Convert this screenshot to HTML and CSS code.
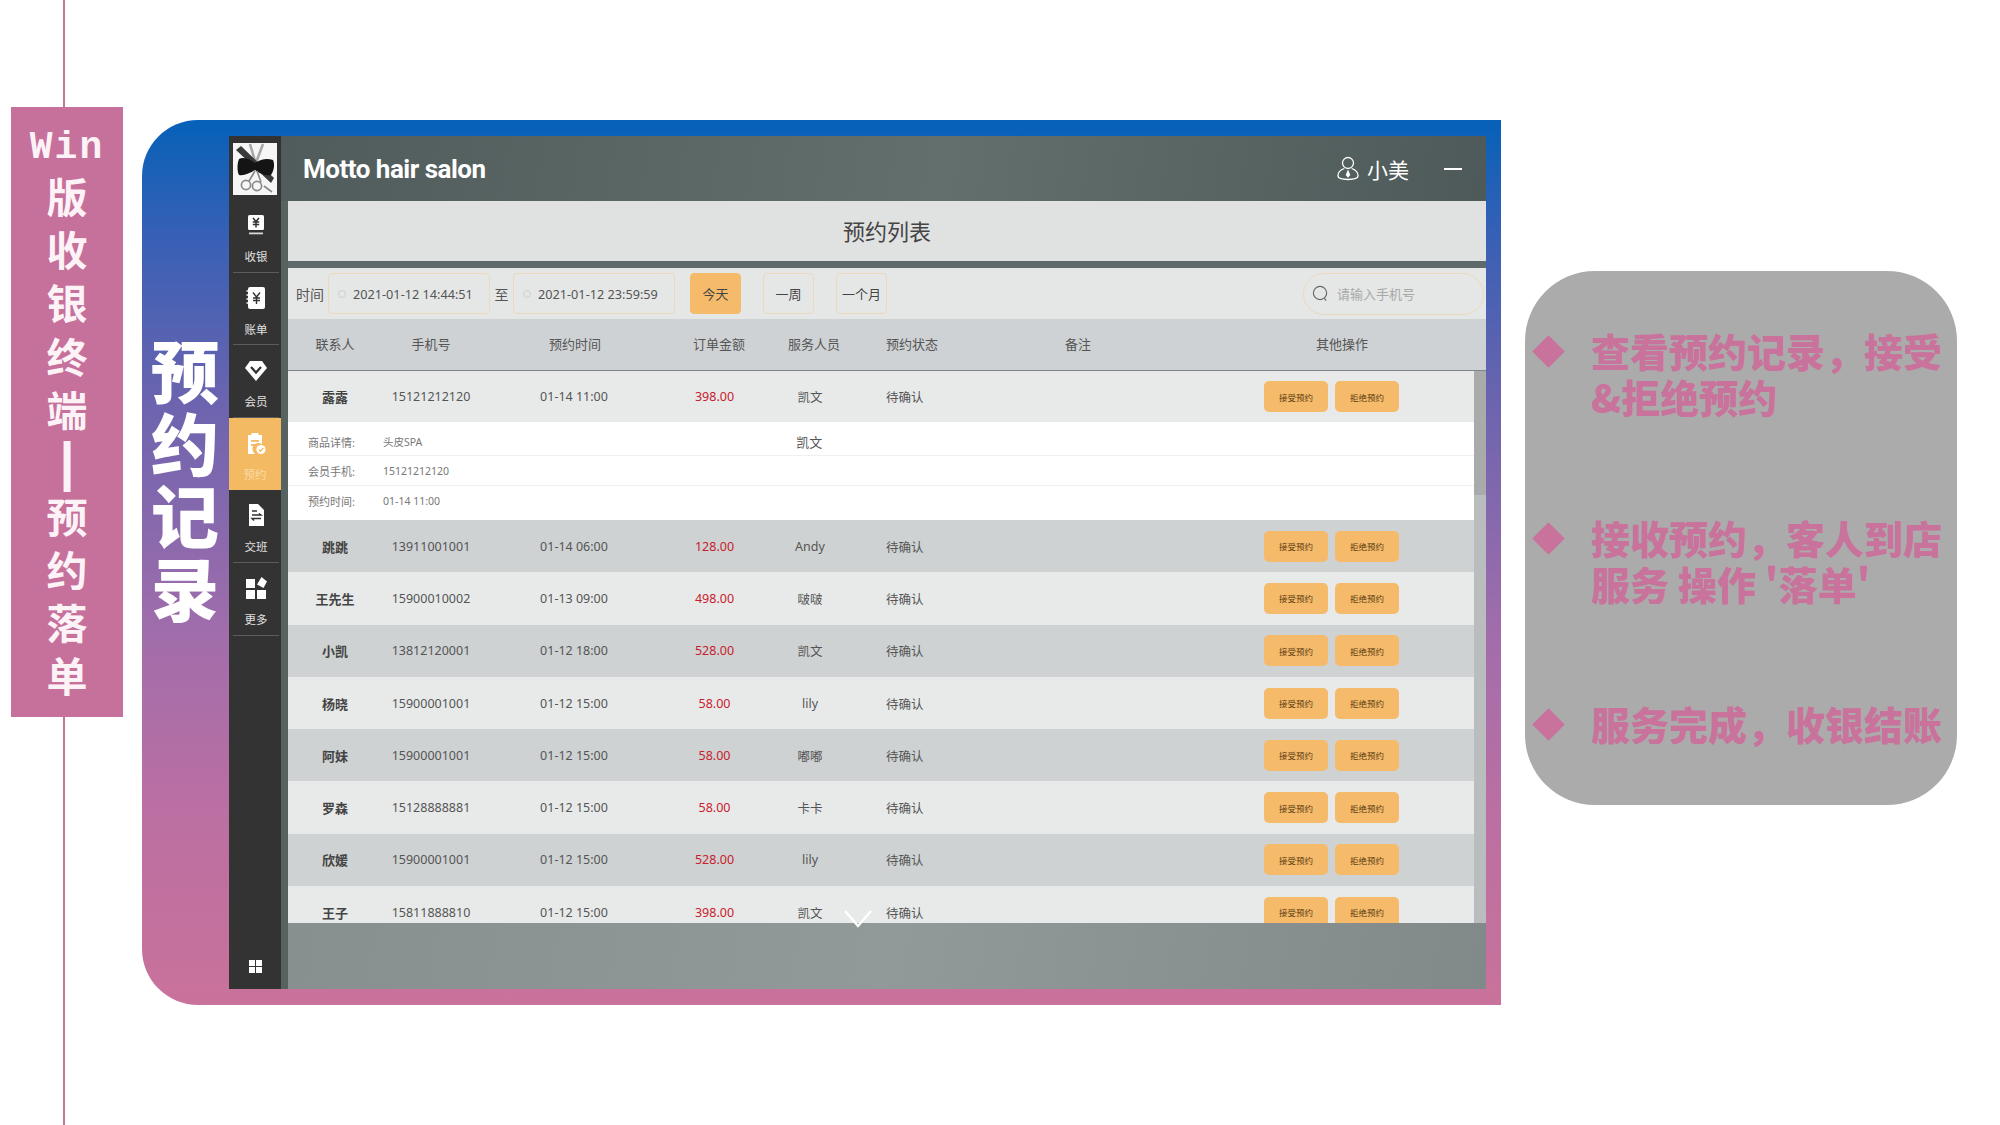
FILE: index.html
```html
<!doctype html>
<html lang="zh-CN">
    <head>
        <meta name="viewport" content="width=device-width, initial-scale=1">
        <title>Win版收银终端 预约落单</title>
        <link rel="stylesheet" href="styles.css">
    </head>
    <body>
        <div class="slide">
            <div class="rail">
                <div class="rail-line rail-top"></div>
                <div class="banner">
                    <div class="banner-latin">Win</div>
                    <div>版</div><div>收</div><div>银</div><div>终</div><div>端</div>
                    <div class="banner-bar">|</div>
                    <div>预</div><div>约</div><div>落</div><div>单</div>
                </div>
                <div class="rail-line rail-bottom"></div>
            </div>

            <div class="stage">
                <div class="stage-title">
                    <div>预</div><div>约</div><div>记</div><div>录</div>
                </div>
                <div class="app">
                    <div class="side">
                        <div class="logo">
                            <svg viewBox="0 0 44 52" width="44" height="52">
                                <path d="M17 1 L24 25 M30 1 L21 25" stroke="#a8a8a8" stroke-width="2.6" fill="none"/>
                                <path d="M3 7 L8 3 L41 35 L38 40 Z" fill="#3a3a3a"/>
                                <path d="M22 20 C16 15 9 14 6 16 C4 21 4 28 6 32 C11 33 17 30 22 27 C27 31 33 33 38 32 C41 28 42 21 40 17 C34 15 28 16 22 20 Z" fill="#141414"/>
                                <circle cx="13" cy="42" r="4.6" fill="none" stroke="#8a8a8a" stroke-width="1.7"/>
                                <circle cx="24" cy="43" r="4.6" fill="none" stroke="#8a8a8a" stroke-width="1.7"/>
                                <path d="M16 38 L22 28 M28 39 L24 28 M31 43 L39 49" stroke="#8a8a8a" stroke-width="1.7" fill="none"/>
                            </svg>
                        </div>
                        <div class="side-item">
                            <svg class="side-icon" viewBox="0 0 24 24" width="24" height="24">
                                <rect x="4" y="2" width="16" height="15" rx="1.5" fill="#fff"/>
                                <path d="M9 5 L12 8.5 L15 5 M8.8 9 H15.2 M8.8 11.5 H15.2 M12 8.5 V14.5" stroke="#333" stroke-width="1.5" fill="none"/>
                                <rect x="5" y="19.5" width="14" height="1.8" fill="#d8d8d8"/>
                            </svg>
                            <span>收银</span>
                        </div>
                        <div class="side-item">
                            <svg class="side-icon" viewBox="0 0 24 24" width="24" height="24">
                                <rect x="4" y="1" width="17" height="22" rx="2" fill="#fff"/>
                                <path d="M2.5 5 H6 M2.5 9 H6 M2.5 13 H6 M2.5 17 H6" stroke="#fff" stroke-width="1.4"/>
                                <path d="M9 6.5 L12.5 11 L16 6.5 M9 12 H16 M9 14.5 H16 M12.5 11 V18" stroke="#333" stroke-width="1.4" fill="none"/>
                            </svg>
                            <span>账单</span>
                        </div>
                        <div class="side-item">
                            <svg class="side-icon" viewBox="0 0 24 24" width="24" height="24">
                                <path d="M6 3 H18 L23 10 L12 23 L1 10 Z" fill="#fff"/>
                                <path d="M7 9 L12 14.5 L17 9" stroke="#333" stroke-width="2.2" fill="none"/>
                            </svg>
                            <span>会员</span>
                        </div>
                        <div class="side-item side-item-active">
                            <svg class="side-icon" viewBox="0 0 24 24" width="24" height="24">
                                <path d="M5 4 H8.5 V2 H15.5 V4 H19 V13 A6 6 0 0 0 12 23 H5 Z" fill="#fff"/>
                                <rect x="8" y="9" width="8" height="1.8" fill="#f4b963"/>
                                <rect x="8" y="13" width="4" height="1.8" fill="#f4b963"/>
                                <circle cx="18" cy="18.5" r="4.6" fill="#fff"/>
                                <path d="M15.8 18.5 L17.5 20.2 L20.3 17" stroke="#f4b963" stroke-width="1.3" fill="none"/>
                            </svg>
                            <span>预约</span>
                        </div>
                        <div class="side-item">
                            <svg class="side-icon" viewBox="0 0 24 24" width="24" height="24">
                                <path d="M5 1 H14 L20 7 V23 H5 Z" fill="#fff"/>
                                <path d="M8 8 H13 M8 12 H17 L15 10.5 M17 15.5 H8 L10 17.5" stroke="#333" stroke-width="1.4" fill="none"/>
                            </svg>
                            <span>交班</span>
                        </div>
                        <div class="side-item">
                            <svg class="side-icon" viewBox="0 0 24 24" width="24" height="24">
                                <rect x="2" y="3" width="9" height="9" fill="#fff"/>
                                <rect x="2" y="14" width="9" height="9" fill="#fff"/>
                                <rect x="13" y="14" width="9" height="9" fill="#fff"/>
                                <path d="M17.5 1 L23 5.5 L19.5 12 L13 8.5 Z" fill="#fff"/>
                            </svg>
                            <span>更多</span>
                        </div>
                        <div class="side-spacer"></div>
                        <div class="side-grid">
                            <i></i><i></i><i></i><i></i>
                        </div>
                    </div>

                    <div class="main">
                        <div class="topbar">
                            <div class="brand">Motto hair salon</div>
                            <div class="user">
                                <svg viewBox="0 0 24 28" width="22" height="27">
                                    <circle cx="12" cy="8" r="6" fill="none" stroke="#fff" stroke-width="1.4"/>
                                    <path d="M8 14 C2 16 1 20 1 22 C1 25 4 26 12 26 C20 26 23 25 23 22 C23 20 22 16 16 14" fill="none" stroke="#fff" stroke-width="1.4"/>
                                    <path d="M12 15 L14.5 21 L12 24 L9.5 21 Z" fill="#fff"/>
                                </svg>
                                <span>小美</span>
                            </div>
                            <div class="minimize"></div>
                        </div>
                        <div class="pagehead">预约列表</div>
                        <div class="filters">
                            <span class="filter-label">时间</span>
                            <div class="date-box"><i class="clock"></i>2021-01-12 14:44:51</div>
                            <span class="filter-to">至</span>
                            <div class="date-box"><i class="clock"></i>2021-01-12 23:59:59</div>
                            <button type="button" class="range range-on">今天</button>
                            <button type="button" class="range">一周</button>
                            <button type="button" class="range">一个月</button>
                            <div class="search">
                                <svg viewBox="0 0 18 18" width="17" height="17">
                                    <circle cx="8.5" cy="8.5" r="7" fill="none" stroke="#666" stroke-width="1.2"/>
                                    <path d="M13 14 L15 16.5" stroke="#666" stroke-width="1.2"/>
                                </svg>
                                <span>请输入手机号</span>
                            </div>
                        </div>
                        <div class="thead">
                            <div class="th">联系人</div>
                            <div class="th">手机号</div>
                            <div class="th">预约时间</div>
                            <div class="th">订单金额</div>
                            <div class="th">服务人员</div>
                            <div class="th th-left">预约状态</div>
                            <div class="th">备注</div>
                            <div class="th th-ops">其他操作</div>
                        </div>
                        <div class="tbody">
                            <div class="scroll-thumb"></div>
                            <div class="row row-first">
                                <b>露露</b><span>15121212120</span><span>01-14 11:00</span><em>398.00</em><span>凯文</span><span class="status">待确认</span>
                                <div class="ops"><button type="button">接受预约</button><button type="button">拒绝预约</button></div>
                            </div>
                            <div class="detail">
                                <div class="detail-row"><label>商品详情:</label><span>头皮SPA</span><span class="detail-staff">凯文</span></div>
                                <div class="detail-row"><label>会员手机:</label><span>15121212120</span></div>
                                <div class="detail-row"><label>预约时间:</label><span>01-14 11:00</span></div>
                            </div>
                            <div class="row row-dark">
                                <b>跳跳</b><span>13911001001</span><span>01-14 06:00</span><em>128.00</em><span>Andy</span><span class="status">待确认</span>
                                <div class="ops"><button type="button">接受预约</button><button type="button">拒绝预约</button></div>
                            </div>
                            <div class="row">
                                <b>王先生</b><span>15900010002</span><span>01-13 09:00</span><em>498.00</em><span>啵啵</span><span class="status">待确认</span>
                                <div class="ops"><button type="button">接受预约</button><button type="button">拒绝预约</button></div>
                            </div>
                            <div class="row row-dark">
                                <b>小凯</b><span>13812120001</span><span>01-12 18:00</span><em>528.00</em><span>凯文</span><span class="status">待确认</span>
                                <div class="ops"><button type="button">接受预约</button><button type="button">拒绝预约</button></div>
                            </div>
                            <div class="row">
                                <b>杨晓</b><span>15900001001</span><span>01-12 15:00</span><em>58.00</em><span>lily</span><span class="status">待确认</span>
                                <div class="ops"><button type="button">接受预约</button><button type="button">拒绝预约</button></div>
                            </div>
                            <div class="row row-dark">
                                <b>阿妹</b><span>15900001001</span><span>01-12 15:00</span><em>58.00</em><span>嘟嘟</span><span class="status">待确认</span>
                                <div class="ops"><button type="button">接受预约</button><button type="button">拒绝预约</button></div>
                            </div>
                            <div class="row">
                                <b>罗森</b><span>15128888881</span><span>01-12 15:00</span><em>58.00</em><span>卡卡</span><span class="status">待确认</span>
                                <div class="ops"><button type="button">接受预约</button><button type="button">拒绝预约</button></div>
                            </div>
                            <div class="row row-dark">
                                <b>欣媛</b><span>15900001001</span><span>01-12 15:00</span><em>528.00</em><span>lily</span><span class="status">待确认</span>
                                <div class="ops"><button type="button">接受预约</button><button type="button">拒绝预约</button></div>
                            </div>
                            <div class="row">
                                <b>王子</b><span>15811888810</span><span>01-12 15:00</span><em>398.00</em><span>凯文</span><span class="status">待确认</span>
                                <div class="ops"><button type="button">接受预约</button><button type="button">拒绝预约</button></div>
                            </div>
                        </div>
                        <div class="tfoot">
                            <svg class="more-arrow" viewBox="0 0 30 20" width="30" height="20">
                                <path d="M2 2 L15 17 L28 2" stroke="#fff" stroke-width="2.4" fill="none"/>
                            </svg>
                        </div>
                    </div>
                </div>
            </div>

            <div class="notes">
                <div class="note">
                    <i class="diamond"></i>
                    <p>查看预约记录&#xFF0C;接受<br>&amp;拒绝预约</p>
                </div>
                <div class="note">
                    <i class="diamond"></i>
                    <p>接收预约&#xFF0C;客人到店<br>服务 操作 '落单'</p>
                </div>
                <div class="note">
                    <i class="diamond"></i>
                    <p>服务完成&#xFF0C;收银结账</p>
                </div>
            </div>
        </div>
    </body>
</html>
```

FILE: styles.css
```css
* {
    box-sizing: border-box;
}
html, body {
    margin: 0;
    padding: 0;
}
body {
    width: 2000px;
    height: 1125px;
    overflow: hidden;
    background-color: #fff;
    font-family: "Noto Sans", "Noto Sans CJK SC", sans-serif;
    color: #444;
}
.slide {
    display: flex;
    align-items: flex-start;
    height: 1125px;
}

/* left rail */
.rail {
    width: 112px;
    height: 1125px;
    margin-left: 11px;
    flex: none;
    display: flex;
    flex-direction: column;
    align-items: flex-start;
}
.rail-line {
    width: 2px;
    margin-left: 52px;
    background-color: #c9729c;
}
.rail-top {
    height: 107px;
}
.rail-bottom {
    flex: 1;
}
.banner {
    width: 112px;
    height: 610px;
    padding-top: 13.5px;
    background-color: #c6709c;
    color: #fdf3f7;
    font-family: "Noto Sans CJK SC", sans-serif;
    font-weight: 700;
    font-size: 41px;
    line-height: 53.3px;
    text-align: center;
}
.banner-latin {
    margin-bottom: -5px;
    font-family: "Liberation Mono", monospace;
    font-size: 38px;
    letter-spacing: 2px;
}
.banner-bar {
    font-family: "Liberation Sans", sans-serif;
    font-size: 54px;
}

/* gradient panel */
.stage {
    width: 1359px;
    height: 885px;
    margin-top: 120px;
    margin-left: 19px;
    flex: none;
    display: flex;
    justify-content: flex-end;
    padding: 16px 15px 16px 0;
    position: relative;
    border-radius: 56px 0 0 56px;
    background: linear-gradient(180deg, #0661b8 0%, #3a60b5 14%, #6c64af 32%, #a16dab 58%, #bb6fa2 78%, #c9729b 100%);
}
.stage-title {
    position: absolute;
    left: 8px;
    top: 213px;
    width: 70px;
    color: #fff;
    font-family: "Noto Sans CJK SC", sans-serif;
    font-weight: 900;
    font-size: 68px;
    line-height: 72.5px;
    text-align: center;
}

/* app window */
.app {
    width: 1257px;
    display: flex;
}
.side {
    width: 59px;
    flex: none;
    display: flex;
    flex-direction: column;
    background: linear-gradient(90deg, #333 0 52px, #566361 52px);
    padding-right: 7px;
}
.logo {
    height: 52px;
    width: 44px;
    margin: 7px 0 5px 4px;
    background-color: #f6f6f6;
}
.side-item {
    height: 72.6px;
    margin: 0 2px 0 4px;
    display: flex;
    flex-direction: column;
    align-items: center;
    padding-top: 13px;
    color: #e0e0e0;
    font-size: 11.5px;
    line-height: 16px;
    border-bottom: 1px solid #5c5c5c;
}
.side-icon {
    margin-bottom: 12px;
}
.side-item-active {
    margin: 0;
    background-color: #f4b963;
    border-bottom: none;
    color: #fbd9a6;
}
.side-spacer {
    flex: 1;
}
.side-grid {
    width: 13px;
    height: 13px;
    margin: 0 0 16px 20px;
    display: grid;
    grid-template-columns: 6px 6px;
    gap: 1px;
}
.side-grid i {
    background-color: #fff;
}

.main {
    flex: 1;
    min-width: 0;
    display: flex;
    flex-direction: column;
}
.topbar {
    height: 65px;
    display: flex;
    align-items: center;
    color: #fff;
    padding: 0 24px 0 22px;
    margin-left: -7px;
    background: linear-gradient(100deg, #4f5c5b 0%, #626f6d 55%, #4e5a59 100%);
}
.brand {
    flex: 1;
    font-family: Roboto, sans-serif;
    font-weight: 700;
    font-size: 26px;
    letter-spacing: -0.5px;
}
.user {
    display: flex;
    align-items: center;
    gap: 8px;
    font-size: 21px;
    margin-right: 35px;
}
.minimize {
    width: 18px;
    height: 2px;
    background-color: #fff;
}
.pagehead {
    height: 60px;
    line-height: 60px;
    text-align: center;
    font-size: 22px;
    background-color: #e0e2e2;
    color: #444;
}
.filters {
    height: 58px;
    border-top: 7px solid #5e6a69;
    padding: 0 2px 0 8px;
    display: flex;
    align-items: center;
    background-color: #e5e7e7;
    font-size: 14px;
    color: #555;
}
.filter-label {
    width: 32px;
}
.filter-to {
    width: 23px;
    text-align: center;
}
.date-box {
    width: 162px;
    height: 41px;
    display: flex;
    align-items: center;
    padding-left: 9px;
    border: 1px solid #ecd9bb;
    border-radius: 4px;
    font-size: 12.7px;
    color: #555;
}
.clock {
    width: 8px;
    height: 8px;
    margin-right: 7px;
    border: 1px solid #cfcfcf;
    border-radius: 50%;
}
.range {
    width: 51px;
    height: 41px;
    margin-left: 22px;
    padding: 0;
    border: 1px solid #ecd9bb;
    border-radius: 4px;
    background: none;
    font-family: inherit;
    font-size: 13px;
    color: #444;
}
.range-on {
    margin-left: 15px;
    background-color: #f5bb6b;
    border-color: #f5bb6b;
}
.search {
    width: 181px;
    height: 42px;
    margin-left: auto;
    display: flex;
    align-items: center;
    gap: 8px;
    padding-left: 8px;
    border: 1px solid #ecd9bb;
    border-radius: 21px;
    color: #a8a8a8;
    font-size: 13px;
}
.thead, .row {
    display: grid;
    align-items: center;
    text-align: center;
}
.thead {
    height: 52px;
    padding-bottom: 2px;
    grid-template-columns: 94px 98px 190px 98px 92px 108px 220px 1fr;
    background-color: #cfd2d4;
    border-bottom: 1px solid #7d8486;
    font-size: 13px;
    color: #555;
}
.th-left {
    text-align: left;
    padding-left: 26px;
}
.th-ops {
    padding-left: 10px;
}
.tbody {
    height: 552px;
    overflow: hidden;
    position: relative;
    padding-right: 12px;
    background-color: #babdbe;
}
.scroll-thumb {
    position: absolute;
    right: 0;
    top: 0;
    width: 12px;
    height: 124px;
    background-color: #a9abab;
}
.row {
    height: 52.3px;
    grid-template-columns: 94px 98px 188px 93px 98px 218px 187px 1fr;
    background-color: #e8eaea;
    font-size: 12.5px;
    color: #555;
}
.row-first {
    height: 51px;
}
.row-dark {
    background-color: #cfd2d3;
}
.row b {
    font-size: 13px;
    color: #444;
}
.row em {
    font-style: normal;
    color: #c8202c;
}
.status {
    text-align: left;
    padding-left: 27px;
}
.ops {
    grid-column: 8;
    display: flex;
    gap: 7px;
}
.ops button {
    width: 64px;
    height: 31px;
    padding: 0;
    border: none;
    border-radius: 5px;
    background-color: #f5bb6b;
    font-family: inherit;
    font-size: 8.5px;
    color: #5a3a10;
}
.detail {
    height: 98px;
    background-color: #fff;
    font-size: 10.5px;
    color: #777;
}
.detail-row {
    height: 30px;
    padding-left: 20px;
    display: flex;
    align-items: center;
    border-bottom: 1px solid #f0f0f0;
    color: #777;
}
.detail-row:first-child {
    height: 34px;
    padding-top: 6px;
}
.detail-row:last-child {
    height: 34px;
    padding-bottom: 5px;
    border-bottom: none;
}
.detail-row label {
    width: 75px;
    font-size: 11px;
}
.detail-staff {
    margin-left: 374px;
    font-size: 13px;
    color: #555;
}
.tfoot {
    flex: 1;
    position: relative;
    background: linear-gradient(100deg, #88908f 0%, #929a99 50%, #828a89 100%);
}
.more-arrow {
    position: absolute;
    left: 555px;
    top: -14px;
}

/* notes on the right */
.notes {
    width: 432px;
    height: 534px;
    margin: 271px 0 0 24px;
    flex: none;
    display: flex;
    flex-direction: column;
    gap: 94.5px;
    padding-top: 56px;
    border-radius: 70px;
    background-color: #ababab;
    color: #c9729c;
}
.note {
    display: flex;
}
.note p {
    margin: 0 0 0 31px;
    font-family: "Noto Sans CJK SC", sans-serif;
    font-weight: 900;
    font-size: 39px;
    line-height: 46px;
}
.diamond {
    width: 23px;
    height: 23px;
    margin: 13px 0 0 12px;
    flex: none;
    transform: rotate(45deg);
    background-color: #c9729c;
}
```
